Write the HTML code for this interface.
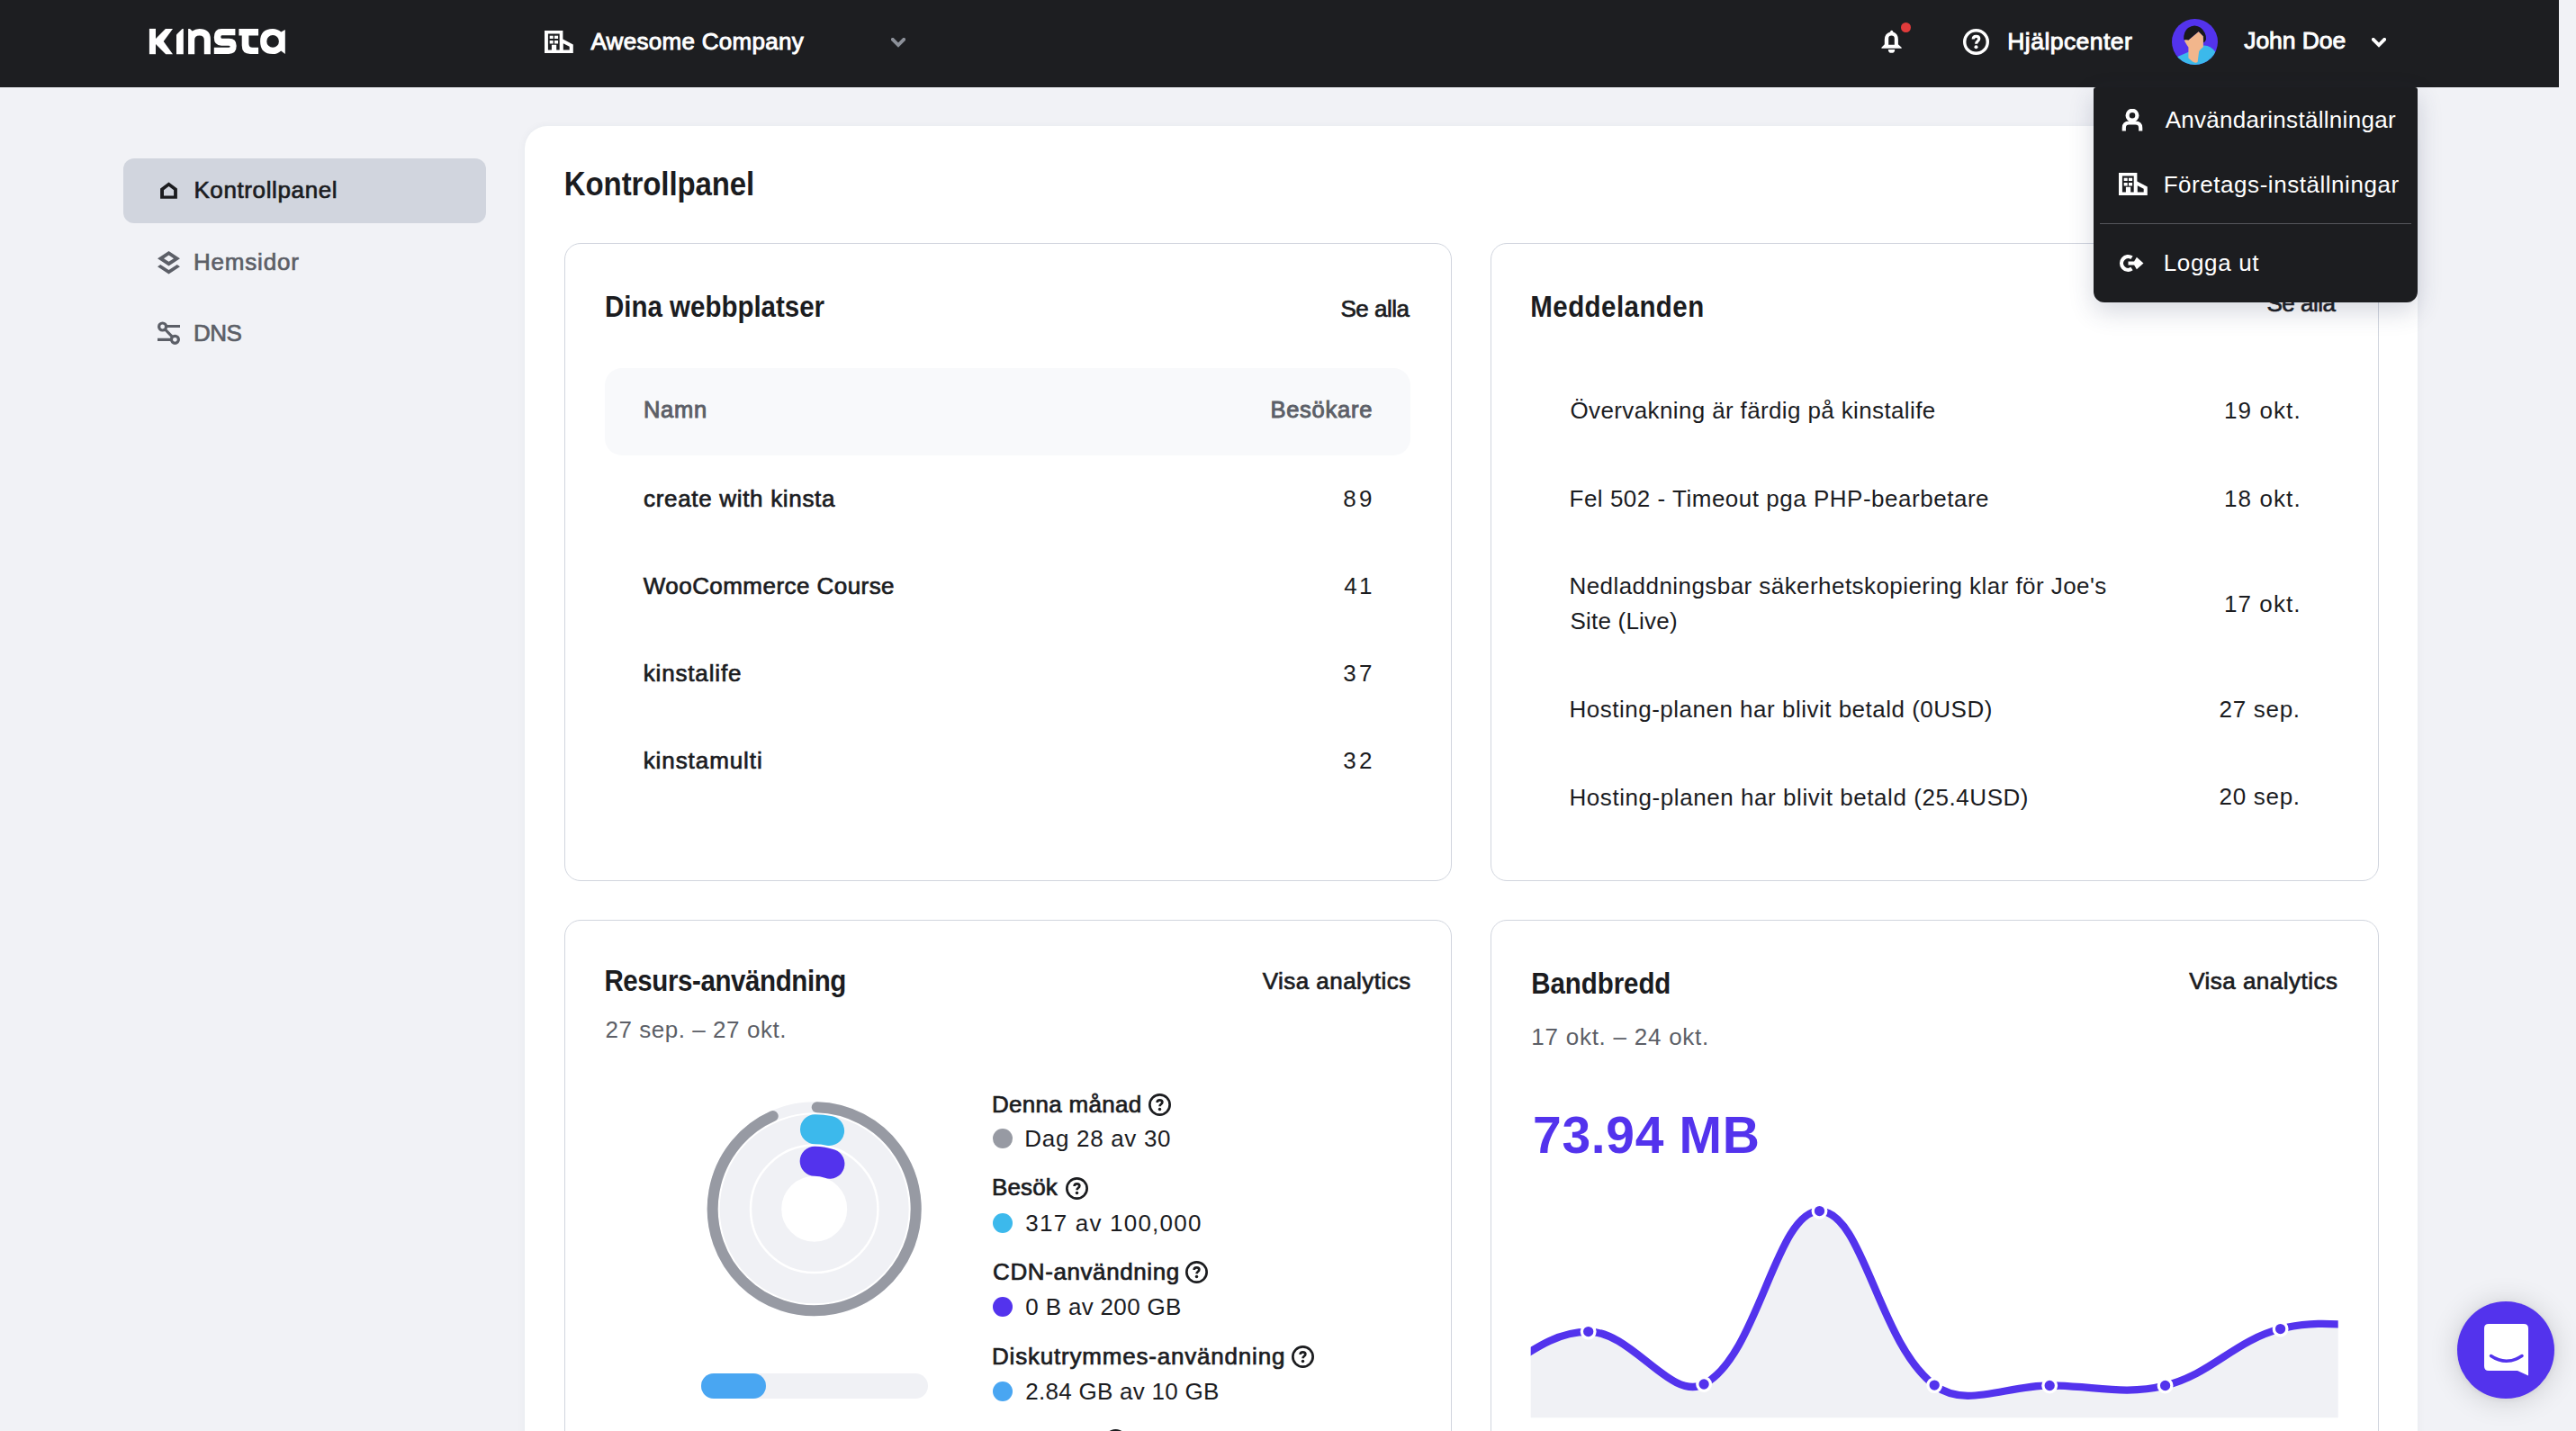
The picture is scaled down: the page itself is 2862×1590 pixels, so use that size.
<!DOCTYPE html><html><head><meta charset="utf-8"><title>Kinsta</title><style>*{margin:0;padding:0;box-sizing:border-box}
html,body{width:2862px;height:1590px;overflow:hidden;background:#f1f2f6;font-family:"Liberation Sans",sans-serif}
.t{position:absolute;white-space:nowrap}
.a{position:absolute}</style></head><body>
<div class="a" style="left:0;top:0;width:2843px;height:97px;background:#1d1e21"></div>
<svg class="a" style="left:160px;top:25px" width="165" height="42" viewBox="160 25 165 42"><g fill="#fff">
<rect x="165.9" y="31.9" width="7.1" height="28.3"/>
<path d="M173 42.9 L183.9 31.9 L192 31.9 L181.7 45.9 L192 60.2 L184.2 60.2 L173 49 Z"/>
<path d="M196 60.2 V38.6 L202.5 31.9 H203.8 V60.2 Z"/>
<path d="M209.1 60.2 V31.9 H211 L213.6 34.6 Q217 31.9 221.5 31.9 Q233.9 31.9 233.9 43.5 V60.2 H226.8 V44.5 Q226.8 39.4 221.5 39.4 Q216.2 39.4 216.2 44.5 V60.2 Z"/>
<path d="M246 32 H261.4 V39.2 H246.5 Q245.3 39.2 245.3 41 Q245.3 42.7 246.5 42.7 H254.5 Q262.7 42.7 262.7 51 Q262.7 59.9 254 59.9 H237.8 V52.7 H254 Q255.7 52.7 255.7 51.7 Q255.7 50.7 254 50.7 H246 Q237.8 50.7 237.8 41.5 Q237.8 32 246 32 Z"/>
<path d="M265.4 32 H287.1 V39.4 H276.4 V48.5 Q276.4 52.7 280.5 52.7 H287.1 V59.9 H278 Q268.7 59.9 268.7 50.5 V39.4 H265.4 Z"/>
<path fill-rule="evenodd" d="M303 32 Q308.5 32 312.3 35.6 L316.8 33 V59.9 L312.2 56.4 Q308.5 60 303 60 Q289.1 60 289.1 46 Q289.1 32 303 32 Z M303.1 39.1 A6.8 6.8 0 1 0 303.1 52.7 A6.8 6.8 0 1 0 303.1 39.1 Z"/>
</g></svg>
<svg class="a" style="left:605px;top:33.9px" width="31.8" height="25" viewBox="0 0 31.8 25">
<path fill="#fff" fill-rule="evenodd" d="M0 0 H20.4 V9.4 L31.8 15.4 V25 H0 Z M3.9 3.5 H16.7 V21.4 H13.2 V15.7 H7.9 V21.4 H3.9 Z M20.8 14.2 L27.7 17.8 V21.5 H20.8 Z"/>
<rect x="5.7" y="5.7" width="4" height="3.3" fill="#fff"/><rect x="11" y="5.7" width="4.1" height="3.3" fill="#fff"/>
<rect x="5.7" y="11" width="4" height="3.5" fill="#fff"/><rect x="11" y="11" width="4.1" height="3.5" fill="#fff"/>
</svg>
<svg class="a" style="left:989.5px;top:42px" width="16" height="11" viewBox="0 0 16 11"><path d="M1.8 1.8 L8 8 L14.2 1.8" fill="none" stroke="#8c9099" stroke-width="3.8" stroke-linecap="square"/></svg>
<svg class="a" style="left:2088px;top:32px" width="27" height="28" viewBox="0 0 27 28">
<path fill="#fff" fill-rule="evenodd" d="M13.7 1.8 Q15.3 1.8 15.3 3.6 Q20.9 5.5 20.9 12 V17.2 L24.7 20.8 V21.8 H2.4 V20.8 L5.8 17.2 V12 Q5.8 5.5 12.1 3.6 Q12.1 1.8 13.7 1.8 Z M10.2 17.7 H16.8 V10.6 Q16.8 7.5 13.5 7.5 Q10.2 7.5 10.2 10.6 Z"/>
<path fill="#fff" d="M9.9 22.9 H17.2 Q17.2 26.8 13.55 26.8 Q9.9 26.8 9.9 22.9 Z"/></svg>
<div class="a" style="left:2111.9px;top:24.8px;width:11.2px;height:11.2px;border-radius:50%;background:#e03b3b"></div>
<svg class="a" style="left:2180.9px;top:31.9px" width="29" height="29" viewBox="0 0 30 30">
<circle cx="15" cy="15" r="13.24" fill="none" stroke="#fff" stroke-width="3.52"/>
<path d="M11.6 12 Q11.6 8.7 15 8.7 Q18.4 8.7 18.4 11.5 Q18.4 13.1 16.6 14.4 Q15.1 15.5 15.1 17.2" fill="none" stroke="#fff" stroke-width="3.3"/>
<circle cx="15" cy="21" r="2.1" fill="#fff"/></svg>
<svg class="a" style="left:2413px;top:21px" width="51" height="51" viewBox="0 0 51 51">
<defs><clipPath id="av"><circle cx="25.5" cy="25.5" r="25.5"/></clipPath></defs>
<g clip-path="url(#av)"><rect width="51" height="51" fill="#5333ed"/>
<path d="M4 43 L19 36.4 L30 34 L35.3 29.6 Q43 29.2 49 37.5 L53 53 L0 53 Z" fill="#3bb9eb"/>
<path d="M14 24.6 Q14.6 22.8 16.6 22.6 L18.4 23.6 L29.7 14.1 L34.9 19.3 L34.9 31 L30.8 35 L30.1 36.5 L28.6 48 Q26 49.6 23 47.6 L18.4 43.5 L18.4 31.5 L16.8 29.2 Z" fill="#f2b68c"/>
<path d="M13.2 22.9 Q12.8 14 18 10 Q21.8 7.3 25.3 7.4 Q33 7.8 36.6 15.5 Q38.4 19 38 22.8 Q37.5 25.2 35.1 26.6 L34.9 19.3 L29.7 14.1 L18.4 23.6 Z" fill="#19191b"/>
</g></svg>
<svg class="a" style="left:2634.5px;top:42px" width="16" height="11" viewBox="0 0 16 11"><path d="M1.8 1.8 L8 8 L14.2 1.8" fill="none" stroke="#fff" stroke-width="3.8" stroke-linecap="square"/></svg>
<div class="t" style="left:656.4px;top:33.0px;font-size:26px;line-height:26px;font-weight:400;color:#ffffff;letter-spacing:0.300px;-webkit-text-stroke:0.95px #ffffff;">Awesome Company</div>
<div class="t" style="left:2230.3px;top:32.9px;font-size:26.5px;line-height:26.5px;font-weight:400;color:#ffffff;letter-spacing:0.440px;-webkit-text-stroke:0.95px #ffffff;">Hjälpcenter</div>
<div class="t" style="left:2493.3px;top:32.2px;font-size:26.5px;line-height:26.5px;font-weight:400;color:#ffffff;letter-spacing:-0.086px;-webkit-text-stroke:0.95px #ffffff;">John Doe</div>
<div class="a" style="left:137px;top:176px;width:403px;height:72px;border-radius:12px;background:#d1d5de"></div>
<svg class="a" style="left:178px;top:202px" width="19" height="19" viewBox="0 0 19 19">
<path d="M9.5 0.4 L18.9 7.4 V18.8 H0.1 V7.4 Z M9.5 5 L4 9.3 V15.6 H15.1 V9.3 Z" fill="#1b1c1f" fill-rule="evenodd"/></svg>
<svg class="a" style="left:175px;top:278.5px" width="25" height="26" viewBox="0 0 25 26">
<path d="M12.5 0 L25 8.2 L12.5 16.4 L0 8.2 Z M12.5 4.6 L7 8.2 L12.5 11.8 L18 8.2 Z" fill="#5c5f67" fill-rule="evenodd"/>
<path d="M0 17.3 L3.3 15 L12.5 21 L21.7 15 L25 17.3 L12.5 25.5 Z" fill="#5c5f67"/></svg>
<svg class="a" style="left:175px;top:357px" width="26" height="27" viewBox="0 0 26 27">
<g fill="none" stroke="#5c5f67" stroke-width="3.2">
<circle cx="5.6" cy="6" r="4"/><circle cx="19.4" cy="20.3" r="4"/>
<path d="M9.6 5.5 H25 M0 20.3 H15.4 M8.4 9 L16.6 17.3"/></g></svg>
<div class="t" style="left:215.4px;top:198.0px;font-size:26px;line-height:26px;font-weight:400;color:#1b1c1f;letter-spacing:0.617px;-webkit-text-stroke:0.7px #1b1c1f;">Kontrollpanel</div>
<div class="t" style="left:215.0px;top:278.0px;font-size:26px;line-height:26px;font-weight:400;color:#5c5f67;letter-spacing:0.800px;-webkit-text-stroke:0.7px #5c5f67;">Hemsidor</div>
<div class="t" style="left:215.0px;top:357.0px;font-size:26px;line-height:26px;font-weight:400;color:#5c5f67;letter-spacing:-0.500px;-webkit-text-stroke:0.7px #5c5f67;">DNS</div>
<div class="a" style="left:583px;top:140px;width:2103px;height:1600px;border-radius:25px;background:#fff;box-shadow:0 0 10px rgba(40,50,80,0.05)"></div>
<div class="t" style="left:626.8px;top:189.4px;font-size:33px;line-height:33px;font-weight:700;color:#1b1c1f;letter-spacing:-0.100px;transform:scaleY(1.100);transform-origin:0 27.94px;">Kontrollpanel</div>
<div class="a" style="left:627px;top:270px;width:986px;height:709px;border:1px solid #d1d5de;border-radius:18px"></div>
<div class="a" style="left:1656px;top:270px;width:987px;height:709px;border:1px solid #d1d5de;border-radius:18px"></div>
<div class="a" style="left:627px;top:1022px;width:986px;height:700px;border:1px solid #d1d5de;border-radius:18px"></div>
<div class="a" style="left:1656px;top:1022px;width:987px;height:700px;border:1px solid #d1d5de;border-radius:18px"></div>
<div class="a" style="left:672px;top:409px;width:895px;height:97px;border-radius:19px;background:#f8f9fb"></div>
<div class="t" style="left:672.0px;top:327.3px;font-size:29.5px;line-height:29.5px;font-weight:700;color:#1b1c1f;letter-spacing:-0.013px;transform:scaleY(1.113);transform-origin:0 24.98px;">Dina webbplatser</div>
<div class="t" style="left:1700.3px;top:327.2px;font-size:29.5px;line-height:29.5px;font-weight:700;color:#1b1c1f;letter-spacing:0.440px;transform:scaleY(1.113);transform-origin:0 24.98px;">Meddelanden</div>
<div class="t" style="left:671.4px;top:1076.0px;font-size:29.5px;line-height:29.5px;font-weight:700;color:#1b1c1f;letter-spacing:-0.400px;transform:scaleY(1.113);transform-origin:0 24.98px;">Resurs-användning</div>
<div class="t" style="left:1701.3px;top:1079.0px;font-size:29.5px;line-height:29.5px;font-weight:700;color:#1b1c1f;letter-spacing:-0.075px;transform:scaleY(1.113);transform-origin:0 24.98px;">Bandbredd</div>
<div class="t" style="left:1489.4px;top:330.0px;font-size:26px;line-height:26px;font-weight:400;color:#1b1c1f;letter-spacing:-0.500px;-webkit-text-stroke:0.7px #1b1c1f;">Se alla</div>
<div class="t" style="left:2518.5px;top:323.7px;font-size:26px;line-height:26px;font-weight:400;color:#1b1c1f;letter-spacing:-0.500px;-webkit-text-stroke:0.7px #1b1c1f;">Se alla</div>
<div class="t" style="left:1402.7px;top:1076.7px;font-size:26px;line-height:26px;font-weight:400;color:#1b1c1f;letter-spacing:0.462px;-webkit-text-stroke:0.7px #1b1c1f;">Visa analytics</div>
<div class="t" style="left:2432.2px;top:1076.9px;font-size:26px;line-height:26px;font-weight:400;color:#1b1c1f;letter-spacing:0.477px;-webkit-text-stroke:0.7px #1b1c1f;">Visa analytics</div>
<div class="t" style="left:714.9px;top:443.4px;font-size:25.5px;line-height:25.5px;font-weight:400;color:#5c5f67;letter-spacing:0.733px;-webkit-text-stroke:0.95px #5c5f67;">Namn</div>
<div class="t" style="left:1411.4px;top:443.1px;font-size:25.5px;line-height:25.5px;font-weight:400;color:#5c5f67;letter-spacing:0.743px;-webkit-text-stroke:0.95px #5c5f67;">Besökare</div>
<div class="t" style="left:715.0px;top:541.0px;font-size:26px;line-height:26px;font-weight:400;color:#1b1c1f;letter-spacing:0.682px;-webkit-text-stroke:0.7px #1b1c1f;">create with kinsta</div>
<div class="t" style="left:714.8px;top:638.2px;font-size:26px;line-height:26px;font-weight:400;color:#1b1c1f;letter-spacing:0.447px;-webkit-text-stroke:0.7px #1b1c1f;">WooCommerce Course</div>
<div class="t" style="left:714.7px;top:734.9px;font-size:26px;line-height:26px;font-weight:400;color:#1b1c1f;letter-spacing:0.844px;-webkit-text-stroke:0.7px #1b1c1f;">kinstalife</div>
<div class="t" style="left:714.7px;top:831.6px;font-size:26px;line-height:26px;font-weight:400;color:#1b1c1f;letter-spacing:0.920px;-webkit-text-stroke:0.7px #1b1c1f;">kinstamulti</div>
<div class="t" style="left:1492.3px;top:540.5px;font-size:26px;line-height:26px;font-weight:400;color:#1b1c1f;letter-spacing:3.200px;">89</div>
<div class="t" style="left:1493.3px;top:638.0px;font-size:26px;line-height:26px;font-weight:400;color:#1b1c1f;letter-spacing:2.200px;">41</div>
<div class="t" style="left:1492.3px;top:734.5px;font-size:26px;line-height:26px;font-weight:400;color:#1b1c1f;letter-spacing:3.200px;">37</div>
<div class="t" style="left:1492.3px;top:831.6px;font-size:26px;line-height:26px;font-weight:400;color:#1b1c1f;letter-spacing:3.200px;">32</div>
<div class="t" style="left:1744.5px;top:443.0px;font-size:26px;line-height:26px;font-weight:400;color:#1b1c1f;letter-spacing:0.371px;">Övervakning är färdig på kinstalife</div>
<div class="t" style="left:1743.5px;top:541.0px;font-size:26px;line-height:26px;font-weight:400;color:#1b1c1f;letter-spacing:0.514px;">Fel 502 - Timeout pga PHP-bearbetare</div>
<div class="t" style="left:1743.5px;top:638.3px;font-size:26px;line-height:26px;font-weight:400;color:#1b1c1f;letter-spacing:0.438px;">Nedladdningsbar säkerhetskopiering klar för Joe's</div>
<div class="t" style="left:1744.5px;top:677.0px;font-size:26px;line-height:26px;font-weight:400;color:#1b1c1f;letter-spacing:0.200px;">Site (Live)</div>
<div class="t" style="left:1743.5px;top:775.2px;font-size:26px;line-height:26px;font-weight:400;color:#1b1c1f;letter-spacing:0.500px;">Hosting-planen har blivit betald (0USD)</div>
<div class="t" style="left:1743.5px;top:872.6px;font-size:26px;line-height:26px;font-weight:400;color:#1b1c1f;letter-spacing:0.561px;">Hosting-planen har blivit betald (25.4USD)</div>
<div class="t" style="left:2471.0px;top:443.0px;font-size:26px;line-height:26px;font-weight:400;color:#1b1c1f;letter-spacing:1.100px;">19 okt.</div>
<div class="t" style="left:2471.0px;top:541.0px;font-size:26px;line-height:26px;font-weight:400;color:#1b1c1f;letter-spacing:1.100px;">18 okt.</div>
<div class="t" style="left:2470.9px;top:658.1px;font-size:26px;line-height:26px;font-weight:400;color:#1b1c1f;letter-spacing:1.100px;">17 okt.</div>
<div class="t" style="left:2465.6px;top:774.8px;font-size:26px;line-height:26px;font-weight:400;color:#1b1c1f;letter-spacing:0.700px;">27 sep.</div>
<div class="t" style="left:2465.6px;top:872.0px;font-size:26px;line-height:26px;font-weight:400;color:#1b1c1f;letter-spacing:0.700px;">20 sep.</div>
<div class="t" style="left:672.4px;top:1131.0px;font-size:26px;line-height:26px;font-weight:400;color:#5c5f67;letter-spacing:0.550px;">27 sep. – 27 okt.</div>
<div class="t" style="left:1701.3px;top:1139.0px;font-size:26px;line-height:26px;font-weight:400;color:#5c5f67;letter-spacing:0.750px;">17 okt. – 24 okt.</div>
<div class="t" style="left:1703.0px;top:1232.7px;font-size:57px;line-height:57px;font-weight:700;color:#5333ed;letter-spacing:0.686px;">73.94 MB</div>
<svg class="a" style="left:0;top:0" width="2862" height="1590" viewBox="0 0 2862 1590"><circle cx="904.7" cy="1343.3" r="113" fill="none" stroke="#f0f1f5" stroke-width="12"/><circle cx="904.7" cy="1343.3" r="88.5" fill="none" stroke="#f0f1f5" stroke-width="33"/><circle cx="904.7" cy="1343.3" r="53" fill="none" stroke="#f0f1f5" stroke-width="33"/><path d="M907.66 1230.34 A113 113 0 1 1 858.74 1240.07" fill="none" stroke="#979aa3" stroke-width="12" stroke-linecap="round"/><path d="M905.47 1254.80 A88.5 88.5 0 0 1 921.59 1256.43" fill="none" stroke="#3cb9ec" stroke-width="33" stroke-linecap="round"/><path d="M905.16 1290.30 A53 53 0 0 1 921.96 1293.19" fill="none" stroke="#5333ed" stroke-width="33" stroke-linecap="round"/></svg>
<div class="a" style="left:779px;top:1526px;width:252px;height:28px;border-radius:14px;background:#f0f1f5"></div>
<div class="a" style="left:779px;top:1526px;width:72px;height:28px;border-radius:14px;background:#49a6f2"></div>
<div class="t" style="left:1102.0px;top:1213.6px;font-size:26px;line-height:26px;font-weight:400;color:#1b1c1f;letter-spacing:0.280px;-webkit-text-stroke:0.7px #1b1c1f;">Denna månad</div>
<div class="t" style="left:1138.3px;top:1251.9px;font-size:26px;line-height:26px;font-weight:400;color:#1b1c1f;letter-spacing:0.691px;">Dag 28 av 30</div>
<div class="t" style="left:1102.0px;top:1306.4px;font-size:26px;line-height:26px;font-weight:400;color:#1b1c1f;letter-spacing:0.150px;-webkit-text-stroke:0.7px #1b1c1f;">Besök</div>
<div class="t" style="left:1139.3px;top:1345.5px;font-size:26px;line-height:26px;font-weight:400;color:#1b1c1f;letter-spacing:1.215px;">317 av 100,000</div>
<div class="t" style="left:1103.0px;top:1400.0px;font-size:26px;line-height:26px;font-weight:400;color:#1b1c1f;letter-spacing:0.600px;-webkit-text-stroke:0.7px #1b1c1f;">CDN-användning</div>
<div class="t" style="left:1139.3px;top:1439.0px;font-size:26px;line-height:26px;font-weight:400;color:#1b1c1f;letter-spacing:0.333px;">0 B av 200 GB</div>
<div class="t" style="left:1102.0px;top:1493.6px;font-size:26px;line-height:26px;font-weight:400;color:#1b1c1f;letter-spacing:0.800px;-webkit-text-stroke:0.7px #1b1c1f;">Diskutrymmes-användning</div>
<div class="t" style="left:1139.3px;top:1532.8px;font-size:26px;line-height:26px;font-weight:400;color:#1b1c1f;letter-spacing:0.267px;">2.84 GB av 10 GB</div>
<div class="a" style="left:1103px;top:1254.0px;width:22px;height:22px;border-radius:50%;background:#979aa3"></div>
<div class="a" style="left:1103px;top:1347.6px;width:22px;height:22px;border-radius:50%;background:#3cb9ec"></div>
<div class="a" style="left:1103px;top:1441.2px;width:22px;height:22px;border-radius:50%;background:#5333ed"></div>
<div class="a" style="left:1103px;top:1534.8px;width:22px;height:22px;border-radius:50%;background:#49a6f2"></div>
<svg class="a" style="left:1275.9px;top:1214.8px" width="25" height="25" viewBox="0 0 30 30">
<circle cx="15" cy="15" r="13.38" fill="none" stroke="#1b1c1f" stroke-width="3.24"/>
<path d="M11.6 12 Q11.6 8.7 15 8.7 Q18.4 8.7 18.4 11.5 Q18.4 13.1 16.6 14.4 Q15.1 15.5 15.1 17.2" fill="none" stroke="#1b1c1f" stroke-width="3.3"/>
<circle cx="15" cy="21" r="2.1" fill="#1b1c1f"/></svg>
<svg class="a" style="left:1183.6px;top:1307.6px" width="25" height="25" viewBox="0 0 30 30">
<circle cx="15" cy="15" r="13.38" fill="none" stroke="#1b1c1f" stroke-width="3.24"/>
<path d="M11.6 12 Q11.6 8.7 15 8.7 Q18.4 8.7 18.4 11.5 Q18.4 13.1 16.6 14.4 Q15.1 15.5 15.1 17.2" fill="none" stroke="#1b1c1f" stroke-width="3.3"/>
<circle cx="15" cy="21" r="2.1" fill="#1b1c1f"/></svg>
<svg class="a" style="left:1316.8px;top:1401.2px" width="25" height="25" viewBox="0 0 30 30">
<circle cx="15" cy="15" r="13.38" fill="none" stroke="#1b1c1f" stroke-width="3.24"/>
<path d="M11.6 12 Q11.6 8.7 15 8.7 Q18.4 8.7 18.4 11.5 Q18.4 13.1 16.6 14.4 Q15.1 15.5 15.1 17.2" fill="none" stroke="#1b1c1f" stroke-width="3.3"/>
<circle cx="15" cy="21" r="2.1" fill="#1b1c1f"/></svg>
<svg class="a" style="left:1435.0px;top:1494.8px" width="25" height="25" viewBox="0 0 30 30">
<circle cx="15" cy="15" r="13.38" fill="none" stroke="#1b1c1f" stroke-width="3.24"/>
<path d="M11.6 12 Q11.6 8.7 15 8.7 Q18.4 8.7 18.4 11.5 Q18.4 13.1 16.6 14.4 Q15.1 15.5 15.1 17.2" fill="none" stroke="#1b1c1f" stroke-width="3.3"/>
<circle cx="15" cy="21" r="2.1" fill="#1b1c1f"/></svg>
<svg class="a" style="left:1227.0px;top:1588.4px" width="25" height="25" viewBox="0 0 30 30">
<circle cx="15" cy="15" r="13.38" fill="none" stroke="#1b1c1f" stroke-width="3.24"/>
<path d="M11.6 12 Q11.6 8.7 15 8.7 Q18.4 8.7 18.4 11.5 Q18.4 13.1 16.6 14.4 Q15.1 15.5 15.1 17.2" fill="none" stroke="#1b1c1f" stroke-width="3.3"/>
<circle cx="15" cy="21" r="2.1" fill="#1b1c1f"/></svg>
<svg class="a" style="left:0;top:0" width="2862" height="1590" viewBox="0 0 2862 1590"><defs><clipPath id="cc"><rect x="1700.7" y="1200" width="897" height="375.6"/></clipPath></defs><g clip-path="url(#cc)"><path d="M1636.50 1540.00 C1685.22 1517.05 1715.83 1479.98 1764.70 1479.60 C1813.34 1479.22 1856.13 1557.29 1893.10 1538.00 C1953.72 1506.37 1972.90 1345.39 2021.50 1345.60 C2070.21 1345.81 2086.60 1491.63 2149.20 1539.10 C2183.76 1565.31 2228.56 1539.42 2277.20 1539.50 C2325.99 1539.58 2359.44 1550.82 2405.60 1539.50 C2456.87 1526.92 2482.34 1489.71 2533.60 1476.60 C2579.69 1464.82 2613.08 1474.99 2661.80 1474.00 L2661.8 1575.6 L1636.5 1575.6 Z" fill="#f0f1f5"/><path d="M1636.50 1540.00 C1685.22 1517.05 1715.83 1479.98 1764.70 1479.60 C1813.34 1479.22 1856.13 1557.29 1893.10 1538.00 C1953.72 1506.37 1972.90 1345.39 2021.50 1345.60 C2070.21 1345.81 2086.60 1491.63 2149.20 1539.10 C2183.76 1565.31 2228.56 1539.42 2277.20 1539.50 C2325.99 1539.58 2359.44 1550.82 2405.60 1539.50 C2456.87 1526.92 2482.34 1489.71 2533.60 1476.60 C2579.69 1464.82 2613.08 1474.99 2661.80 1474.00" fill="none" stroke="#5333ed" stroke-width="8.3"/><circle cx="1764.7" cy="1479.6" r="7.3" fill="#5333ed" stroke="#fff" stroke-width="3.3"/><circle cx="1893.1" cy="1538" r="7.3" fill="#5333ed" stroke="#fff" stroke-width="3.3"/><circle cx="2021.5" cy="1345.6" r="7.3" fill="#5333ed" stroke="#fff" stroke-width="3.3"/><circle cx="2149.2" cy="1539.1" r="7.3" fill="#5333ed" stroke="#fff" stroke-width="3.3"/><circle cx="2277.2" cy="1539.5" r="7.3" fill="#5333ed" stroke="#fff" stroke-width="3.3"/><circle cx="2405.6" cy="1539.5" r="7.3" fill="#5333ed" stroke="#fff" stroke-width="3.3"/><circle cx="2533.6" cy="1476.6" r="7.3" fill="#5333ed" stroke="#fff" stroke-width="3.3"/></g></svg>
<div class="a" style="left:2326px;top:97px;width:360px;height:239px;border-radius:3px 3px 12px 12px;background:#1c1d20;box-shadow:0 10px 28px rgba(45,55,95,0.20)"></div>
<svg class="a" style="left:2357px;top:120.5px" width="24" height="25" viewBox="0 0 24 25">
<g fill="none" stroke="#fff" stroke-width="4.2"><circle cx="12" cy="7.2" r="5.4"/><path d="M2.8 24.5 V21 Q2.8 15.5 8.5 15.5 H15.5 Q21.2 15.5 21.2 21 V24.5"/></g></svg>
<svg class="a" style="left:2354.1px;top:191.9px" width="31.8" height="25" viewBox="0 0 31.8 25">
<path fill="#fff" fill-rule="evenodd" d="M0 0 H20.4 V9.4 L31.8 15.4 V25 H0 Z M3.9 3.5 H16.7 V21.4 H13.2 V15.7 H7.9 V21.4 H3.9 Z M20.8 14.2 L27.7 17.8 V21.5 H20.8 Z"/>
<rect x="5.7" y="5.7" width="4" height="3.3" fill="#fff"/><rect x="11" y="5.7" width="4.1" height="3.3" fill="#fff"/>
<rect x="5.7" y="11" width="4" height="3.5" fill="#fff"/><rect x="11" y="11" width="4.1" height="3.5" fill="#fff"/>
</svg>
<svg class="a" style="left:2354px;top:281px" width="29" height="23" viewBox="0 0 29 23">
<path d="M14.5 5.2 A7.4 7.4 0 1 0 14.5 17.6" fill="none" stroke="#fff" stroke-width="4.2"/>
<path d="M10.5 9.4 H17.1 L19.9 4.7 L27.5 11.4 L19.9 18.2 L17.1 13.5 H10.5 Z" fill="#fff"/></svg>
<div class="a" style="left:2333px;top:248px;width:346px;height:1px;background:#55575c"></div>
<div class="t" style="left:2405.7px;top:119.6px;font-size:26px;line-height:26px;font-weight:400;color:#ffffff;letter-spacing:0.290px;">Användarinställningar</div>
<div class="t" style="left:2403.7px;top:191.5px;font-size:26px;line-height:26px;font-weight:400;color:#ffffff;letter-spacing:0.543px;">Företags-inställningar</div>
<div class="t" style="left:2403.7px;top:279.0px;font-size:26px;line-height:26px;font-weight:400;color:#ffffff;letter-spacing:0.657px;">Logga ut</div>
<div class="a" style="left:2730px;top:1446px;width:108px;height:108px;border-radius:50%;background:#5333ed;box-shadow:0 1px 6px rgba(0,0,0,0.06),0 2px 32px rgba(0,0,0,0.16)"></div>
<svg class="a" style="left:2757px;top:1469px" width="54" height="62" viewBox="0 0 54 62">
<path d="M8 2 H47 Q52 2 52 7 V59.5 L40 54 H8 Q3 54 3 49 V7 Q3 2 8 2 Z" fill="#fff"/>
<path d="M10.5 37.5 Q27.5 49 45 37.5" fill="none" stroke="#5333ed" stroke-width="3.4" stroke-linecap="round"/></svg>
</body></html>
